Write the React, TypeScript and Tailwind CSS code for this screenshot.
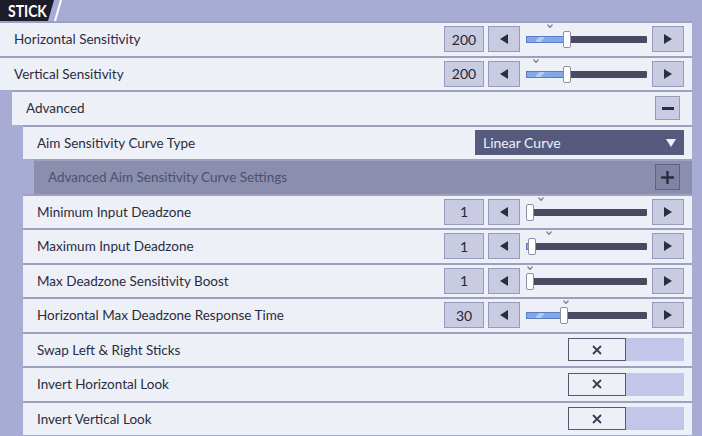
import React from 'react';

type SliderRow = {
  label: string;
  value: string;
  thumb: number;
  caret: number;
  indent: string;
};

const ArrowLeft = () => (
  <svg width="8" height="10" viewBox="0 0 8 10">
    <polygon points="8,0 8,10 0,5" fill="#2b2d40" />
  </svg>
);

const ArrowRight = () => (
  <svg width="8" height="10" viewBox="0 0 8 10">
    <polygon points="0,0 0,10 8,5" fill="#2b2d40" />
  </svg>
);

const Caret = () => (
  <svg width="6" height="4" viewBox="0 0 6 4">
    <polyline points="0.5,0.5 3,3.5 5.5,0.5" fill="none" stroke="#7c7f98" strokeWidth="1.2" />
  </svg>
);

const Slider: React.FC<{ value: string; thumb: number; caret: number }> = ({ value, thumb, caret }) => (
  <div className="flex items-center">
    <div className="w-[40px] h-[26px] flex items-center justify-center bg-[#c8cbe2] border border-[#989bb8] text-[14px] text-[#262838]">
      {value}
    </div>
    <div className="ml-[4px] w-[32px] h-[26px] flex items-center justify-center bg-[#c8cbe2] border border-[#989bb8]">
      <ArrowLeft />
    </div>
    <div className="relative ml-[6px] mr-[5px] w-[121px] h-[30px]">
      <div className="absolute left-0 right-0 top-[12px] h-[7px] bg-[#4a4b63] rounded-[1px]" />
      {thumb > 0 && (
        <div
          className="absolute left-0 top-[12px] h-[7px] bg-[#82a8ec] border border-[#5a7dc0] overflow-hidden"
          style={{ width: thumb + 2 }}
        >
          <div className="absolute left-[10px] top-0 w-[6px] h-full bg-[#b3ccf5] -skew-x-[40deg]" />
        </div>
      )}
      <div
        className="absolute top-[7px] w-[8px] h-[17px] bg-white border border-[#8d8fa5] rounded-[2px]"
        style={{ left: thumb }}
      />
      <div className="absolute top-[0px]" style={{ left: caret }}>
        <Caret />
      </div>
    </div>
    <div className="w-[32px] h-[26px] flex items-center justify-center bg-[#c8cbe2] border border-[#989bb8]">
      <ArrowRight />
    </div>
  </div>
);

const Toggle = () => (
  <div className="flex items-center">
    <div className="w-[58px] h-[23px] flex items-center justify-center bg-[#eef0f8] border-[1.5px] border-[#565970]">
      <svg width="10" height="10" viewBox="0 0 10 10">
        <path d="M1 1 L9 9 M9 1 L1 9" stroke="#3a3c52" strokeWidth="1.8" />
      </svg>
    </div>
    <div className="w-[58px] h-[23px] bg-[#c3c6e9]" />
  </div>
);

const Row: React.FC<{ indent: string; label: string; children?: React.ReactNode; dark?: boolean }> = ({
  indent,
  label,
  children,
  dark,
}) => (
  <div className={`${indent} h-[34.5px] border-t-2 border-[#9da0c0] flex items-center justify-between pl-[14px] pr-[8px] ${dark ? 'bg-[#8c8ead] text-[#4d5072]' : 'bg-[#eef0f8] text-[#2a2c3c]'}`}>
    <span className="text-[13.5px]">{label}</span>
    {children}
  </div>
);

const sliders: SliderRow[] = [
  { label: 'Minimum Input Deadzone', value: '1', thumb: 0, caret: 12, indent: 'ml-[23px]' },
  { label: 'Maximum Input Deadzone', value: '1', thumb: 2, caret: 20, indent: 'ml-[23px]' },
  { label: 'Max Deadzone Sensitivity Boost', value: '1', thumb: 0, caret: 1, indent: 'ml-[23px]' },
  { label: 'Horizontal Max Deadzone Response Time', value: '30', thumb: 34, caret: 37, indent: 'ml-[23px]' },
];

const toggles = ['Swap Left & Right Sticks', 'Invert Horizontal Look', 'Invert Vertical Look'];

export default function App() {
  return (
    <div
      className="w-[702px] h-[436px] overflow-hidden bg-[#a8abd4]"
      style={{ fontFamily: 'Lato, "Noto Sans", sans-serif' }}
    >
      <div className="relative h-[21px] flex items-center">
        <div
          className="h-full w-[54px] bg-[#1c1c2a] flex items-center pl-[8px]"
          style={{ clipPath: 'polygon(0 0, 54px 0, 48px 100%, 0 100%)' }}
        >
          <span className="inline-block origin-left scale-x-[0.82] text-white font-bold text-[17px] leading-none">
            STICK
          </span>
        </div>
        <div className="absolute left-[57px] top-0 h-full w-[2px] bg-white -skew-x-[16deg]" />
      </div>

      <div className="mr-[10px]">
        <Row indent="ml-0" label="Horizontal Sensitivity">
          <Slider value="200" thumb={37} caret={21} />
        </Row>
        <Row indent="ml-0" label="Vertical Sensitivity">
          <Slider value="200" thumb={37} caret={7} />
        </Row>
        <Row indent="ml-[12px]" label="Advanced">
          <div className="mr-[4px] w-[25px] h-[24px] flex items-center justify-center bg-[#c8cbe2] border border-[#989bb8]">
            <div className="w-[12px] h-[2.5px] bg-[#2b2d40]" />
          </div>
        </Row>
        <Row indent="ml-[23px]" label="Aim Sensitivity Curve Type">
          <div className="w-[209px] h-[25px] bg-[#565a7d] flex items-center justify-between pl-[8px] pr-[8px] text-[14px] text-[#eef0fa]">
            <span>Linear Curve</span>
            <svg width="10" height="8" viewBox="0 0 10 8">
              <polygon points="0,0 10,0 5,8" fill="#eef0fa" />
            </svg>
          </div>
        </Row>
        <Row indent="ml-[34px]" label="Advanced Aim Sensitivity Curve Settings" dark>
          <div className="mr-[4px] w-[25px] h-[26px] flex items-center justify-center bg-[#8083a3] border border-[#5f6284]">
            <svg width="13" height="13" viewBox="0 0 13 13">
              <path d="M6.5 0 V13 M0 6.5 H13" stroke="#2b2d40" strokeWidth="2.4" />
            </svg>
          </div>
        </Row>
        {sliders.map((s) => (
          <Row key={s.label} indent={s.indent} label={s.label}>
            <Slider value={s.value} thumb={s.thumb} caret={s.caret} />
          </Row>
        ))}
        {toggles.map((t) => (
          <Row key={t} indent="ml-[23px]" label={t}>
            <Toggle />
          </Row>
        ))}
      </div>
    </div>
  );
}
